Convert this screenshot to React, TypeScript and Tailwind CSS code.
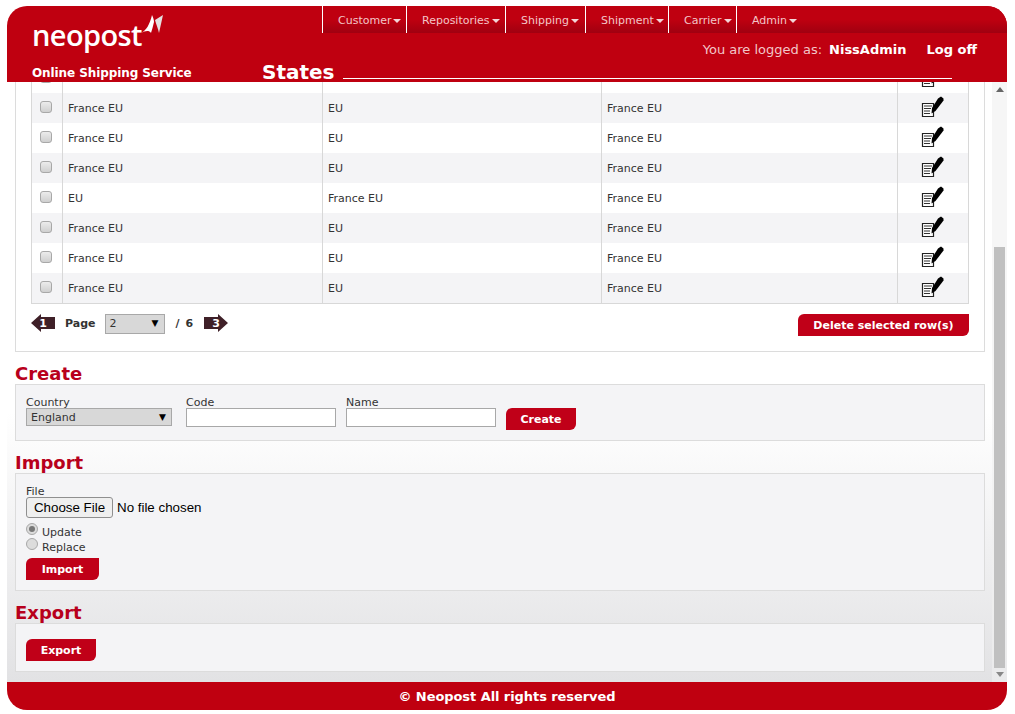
const FONT = "font-['DejaVu_Sans',_Verdana,_sans-serif]";

const navItems = [
  { label: "Customer", width: "w-[84px]" },
  { label: "Repositories", width: "w-[99px]" },
  { label: "Shipping", width: "w-[80px]" },
  { label: "Shipment", width: "w-[83px]" },
  { label: "Carrier", width: "w-[68px]" },
  { label: "Admin", width: "w-[70px] border-l" },
];

const rows = [
  ["France EU", "EU", "France EU"],
  ["France EU", "EU", "France EU"],
  ["France EU", "EU", "France EU"],
  ["EU", "France EU", "France EU"],
  ["France EU", "EU", "France EU"],
  ["France EU", "EU", "France EU"],
  ["France EU", "EU", "France EU"],
];

function EditIcon() {
  return (
    <svg width="24" height="24" viewBox="0 0 24 24" className="block">
      <path d="M1.5 7.5H12.5V20.5H1.5Z" fill="#fff" stroke="#222" strokeWidth="1.2" />
      <path d="M3 10H11M3 12.5H10M3 15H9M3 17.5H9" stroke="#333" strokeWidth="1" fill="none" />
      <path d="M17 2.5L20 0.5L22.5 2.5L22.5 4.5L14.5 15L10.5 17.5L11 12Z" fill="#000" />
    </svg>
  );
}

function Checkbox() {
  return (
    <input
      type="checkbox"
      className="block appearance-none w-[12px] h-[12px] rounded-[3px] border border-[#a8a8a8] bg-gradient-to-b from-[#ececec] to-[#cfcfcf]"
    />
  );
}

function Row({ cells, bg }: { cells: string[]; bg: string }) {
  return (
    <div className={`grid grid-cols-[30px_260px_279px_296px_71px] h-[30px] items-stretch text-[11px] text-[#333] ${bg}`}>
      <div className="pt-[8px] pl-[8px]">
        <Checkbox />
      </div>
      {cells.map((c, i) => (
        <div key={i} className="border-l border-[#d8d8d8] pl-[5px] pt-[2px] flex items-center">
          {c}
        </div>
      ))}
      <div className="border-l border-[#d8d8d8] pl-[23px] pt-[3px]">
        <EditIcon />
      </div>
    </div>
  );
}

function RedButton({ label, className }: { label: string; className: string }) {
  return (
    <button
      className={`block h-[22px] pt-[2px] bg-[#c00018] text-white text-[11px] font-bold rounded-tl-[6px] rounded-br-[6px] ${className}`}
    >
      {label}
    </button>
  );
}

function Arrow({ n, right }: { n: number; right?: boolean }) {
  return (
    <svg width="24" height="18" viewBox="0 0 24 18" className="block">
      <path
        d={right ? "M0 3H14V0L24 9L14 18V15H0Z" : "M24 3H10V0L0 9L10 18V15H24Z"}
        fill="#3f2028"
      />
      <text x="12" y="13" textAnchor="middle" fontSize="11" fontWeight="700" fill="#fff">
        {n}
      </text>
    </svg>
  );
}

function Select({ value, className }: { value: string; className: string }) {
  return (
    <div
      className={`flex items-center justify-between bg-[#d8d8d8] border border-[#a8a8a8] text-[11px] text-[#333] pl-[4px] pr-[5px] ${className}`}
    >
      <span>{value}</span>
      <span className="text-[9px] text-black">▼</span>
    </div>
  );
}

function Radio({ checked, label }: { checked?: boolean; label: string }) {
  return (
    <div className="flex h-[15px]">
      <span className="w-[12px] h-[12px] mt-[-2px] rounded-full border border-[#a8a8a8] bg-[#dcdcdc] flex items-center justify-center">
        {checked && <span className="w-[6px] h-[6px] rounded-full bg-[#777]" />}
      </span>
      <span className="ml-[4px] leading-[15px]">{label}</span>
    </div>
  );
}

function Heading({ children }: { children: string }) {
  return <h2 className="text-[18px] leading-[22px] pt-[1px] h-[22px] font-bold text-[#b8001c]">{children}</h2>;
}

function Scrollbar() {
  return (
    <div className="w-[15px] h-full bg-[#f0f0f0]/60 flex flex-col items-center">
      <div className="h-[165px] w-full flex justify-center pt-[5px]">
        <div className="w-0 h-0 border-x-[4px] border-x-transparent border-b-[5px] border-b-[#666]" />
      </div>
      <div className="w-[11px] h-[421px] bg-[#c0c0c0]" />
      <div className="pt-[4px]">
        <div className="w-0 h-0 border-x-[4px] border-x-transparent border-t-[5px] border-t-[#888]" />
      </div>
    </div>
  );
}

export default function App() {
  return (
    <div className={`${FONT} w-[1015px] h-[714px] bg-white pt-[6px] px-[7px] overflow-hidden`}>
      <header className="h-[76px] w-[1000px] bg-[#bf0010] rounded-t-[20px] flex text-white">
        <div className="w-[255px] pl-[25px] relative">
          <div className="font-['Open_Sans',_sans-serif] font-semibold text-[29px] leading-[40px] mt-[9px] tracking-[-0.6px]">
            neopost
          </div>
          <svg width="24" height="20" viewBox="0 0 24 20" className="absolute left-[133px] top-[9px]">
            <path d="M1 18C6 16 10 9 12 0C13 2 14 5 14 7C13 11 12 15 11 18C9 15 5 16 1 18Z" fill="#fff" />
            <path d="M15 5L23 0L19 18C18 13 16 9 15 5Z" fill="#e4e0e0" />
          </svg>
          <div className="text-[12px] font-bold mt-[9px] tracking-[-0.09px]">Online Shipping Service</div>
        </div>
        <div className="flex-1 flex flex-col">
          <nav className="ml-[60px] h-[27px] flex bg-gradient-to-b from-[#bf0010] from-50% to-[#a00010] rounded-tr-[20px]">
            {navItems.map((item) => (
              <a
                key={item.label}
                className={`border-l border-white pl-[15px] pt-[3px] flex items-center text-[11px] text-[#f2c6c8] ${item.width}`}
              >
                {item.label}
                <span className="ml-[2px] w-0 h-0 border-x-[4px] border-x-transparent border-t-[4px] border-t-[#f2d6d8]" />
              </a>
            ))}
          </nav>
          <div className="h-[27px] pt-[7px] pr-[30px] flex justify-end text-[13px]">
            <span className="text-[#f2c6c8]">You are logged as:</span>
            <span className="font-bold ml-[7px]">NissAdmin</span>
            <span className="font-bold ml-[20px]">Log off</span>
          </div>
          <div className="h-[22px] flex">
            <div className="w-[81px] text-[20px] leading-[24px] font-bold">States</div>
            <div className="w-[609px] h-px bg-white mt-[18px]" />
          </div>
        </div>
      </header>

      <main className="h-[600px] w-[1000px] flex overflow-hidden bg-gradient-to-b from-white from-55% to-[#e2e2e4]">
        <div className="w-[985px] pl-[8px] pr-[7px]">
          <section className="w-[970px] h-[270px] bg-white border-x border-b border-[#dcdcdc] pl-[15px] pr-[15px]">
            <div className="border-x border-b border-[#d8d8d8]">
              <div className="h-[11px] overflow-hidden">
                <div className="mt-[-19px]">
                  <Row cells={["", "", ""]} bg="bg-white" />
                </div>
              </div>
              {rows.map((r, i) => (
                <Row key={i} cells={r} bg={i === 3 || i === 1 || i === 5 ? "bg-white" : "bg-[#f4f4f6]"} />
              ))}
            </div>
            <div className="flex pt-[10px] text-[11px]">
              <Arrow n={1} />
              <span className="font-bold text-[#333] ml-[10px] mr-[9px] pt-[1px] leading-[18px]">Page</span>
              <Select value="2" className="w-[60px] h-[20px]" />
              <span className="font-bold text-[#333] ml-[11px] mr-[10px] pt-[1px] leading-[18px] tracking-[1px]">/ 6</span>
              <Arrow n={3} right />
              <RedButton label="Delete selected row(s)" className="ml-auto w-[171px]" />
            </div>
          </section>

          <div className="mt-[10px]">
            <Heading>Create</Heading>
            <div className="h-[57px] bg-[#f4f4f6] border border-[#dcdcdc] pl-[10px] pt-[12px] flex text-[11px] text-[#333]">
              <div className="w-[160px]">
                <div className="leading-[11px]">Country</div>
                <Select value="England" className="w-[146px] h-[18px] pt-[2px]" />
              </div>
              <div className="w-[160px]">
                <div className="leading-[11px]">Code</div>
                <input className="block w-[150px] h-[19px] bg-white border border-[#a8a8a8]" />
              </div>
              <div className="w-[160px]">
                <div className="leading-[11px]">Name</div>
                <input className="block w-[150px] h-[19px] bg-white border border-[#a8a8a8]" />
              </div>
              <RedButton label="Create" className="w-[70px] mt-[11px]" />
            </div>
          </div>

          <div className="mt-[10px]">
            <Heading>Import</Heading>
            <div className="h-[118px] bg-[#f4f4f6] border border-[#dcdcdc] pl-[10px] pt-[12px] text-[11px] text-[#333]">
              <div className="leading-[11px]">File</div>
              <input
                type="file"
                className="block text-[13.33px] font-['Liberation_Sans',_Arial,_sans-serif] text-black file:mr-[4px] file:h-[21px] file:w-[87px] file:text-[13.33px] file:bg-[#efefef] file:border file:border-[#8f8f8f] file:rounded-[3px]"
              />
              <div className="mt-[7px]">
                <Radio checked label="Update" />
                <Radio label="Replace" />
              </div>
              <RedButton label="Import" className="w-[73px] mt-[3px]" />
            </div>
          </div>

          <div className="mt-[10px]">
            <Heading>Export</Heading>
            <div className="h-[49px] bg-[#f4f4f6] border border-[#dcdcdc] pl-[10px] pt-[15px]">
              <RedButton label="Export" className="w-[70px]" />
            </div>
          </div>
        </div>
        <Scrollbar />
      </main>

      <footer className="h-[28px] w-[1000px] pt-[2px] bg-[#bf0010] rounded-b-[20px] flex items-center justify-center text-white text-[13px] font-bold tracking-[-0.07px]">
        © Neopost All rights reserved
      </footer>
    </div>
  );
}
